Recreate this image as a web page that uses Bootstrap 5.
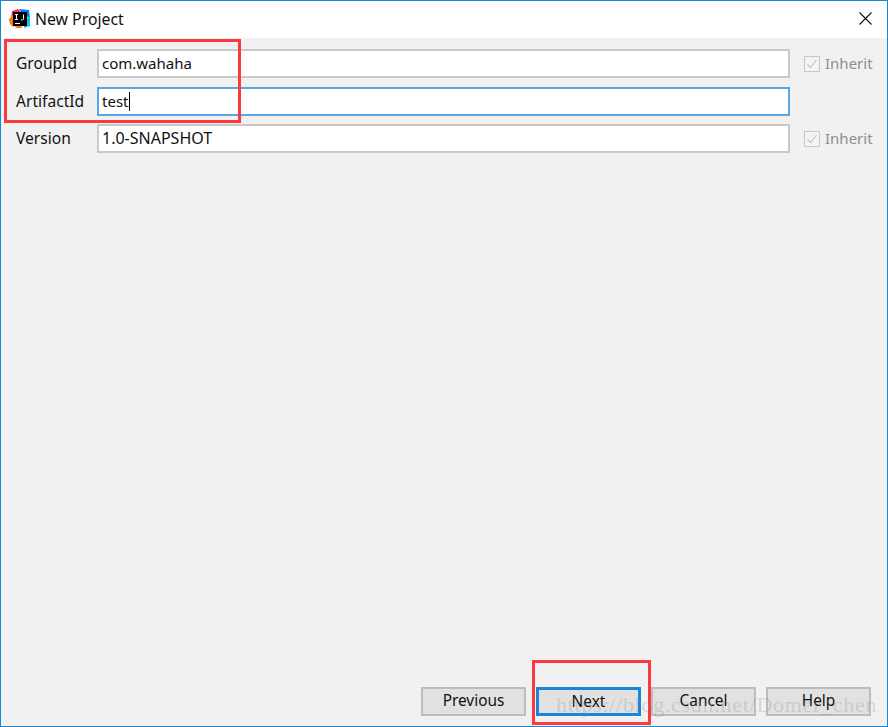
<!DOCTYPE html>
<html lang="en">
<head>
<meta charset="utf-8">
<title>New Project</title>
<link href="https://cdn.jsdelivr.net/npm/bootstrap@5.3.0/dist/css/bootstrap.min.css" rel="stylesheet">
<style>
html,body{height:100%;margin:0;}
body{background:#f1f1f1;font-family:"Noto Sans","Open Sans",sans-serif;font-size:15px;color:#111;}
.dlg-win{position:relative;width:888px;height:727px;border:1px solid #1a86d8;background:#f1f1f1;overflow:hidden;}
.dlg-title{height:37px;background:#fff;padding:0 0 2px 8px;gap:4px;}
.dlg-title-text{font-size:15.8px;line-height:20px;}
.dlg-close{margin-right:15px;}
.dlg-form{padding:11px 16px 0 15px;gap:8.5px;}
.dlg-row{height:29px;}
.dlg-label{width:81px;flex:none;line-height:29px;white-space:nowrap;font-size:15.6px;}
.dlg-input{width:693px;height:29px;flex:none;border:2px solid #c9c9c9;border-radius:0;background:#fff;padding:0 3px;font-size:15px;line-height:25px;color:#111;}
.dlg-input.is-on{border-color:#58a6e4;}
.dlg-value-wide{font-size:16px;}
.dlg-caret{display:inline-block;width:1px;height:19px;background:#000;vertical-align:-4px;margin-left:1px;}
.dlg-inh{margin-left:14px;gap:5px;color:#8e8e8e;}
.dlg-check{width:16px;height:16px;border:1px solid #c8c8c8;background:#f4f4f4;display:flex;}
.dlg-foot{padding:0 16px 10px 0;gap:10px;}
.dlg-btn{width:105px;height:29px;background:#e1e1e1;border:2px solid #bdbdbd;border-radius:0;padding:0 0 3px;font-size:15.4px;line-height:21px;color:#111;}
.dlg-btn.is-main{border:3px solid #1a86d8;padding-bottom:1px;}
.dlg-mark{position:absolute;border:3px solid #fb3a3f;pointer-events:none;}
.dlg-mark-a{left:3px;top:38px;width:237px;height:84px;}
.dlg-mark-b{left:531px;top:659px;width:119px;height:65px;}
.dlg-wm{position:absolute;left:555px;top:692px;font-family:"Liberation Serif",serif;font-size:22px;line-height:24px;color:rgba(120,120,120,.24);white-space:nowrap;letter-spacing:.72px;pointer-events:none;}
</style>
</head>
<body>
<div class="dlg-win d-flex flex-column">
  <div class="dlg-title d-flex align-items-center">
    <svg width="22" height="20" viewBox="0 0 22 20" aria-hidden="true">
      <polygon points="3,2 9,0 12,3 6,13 2,9" fill="#fe315d"/>
      <polygon points="0,10 4,6 7,14 4,18 1,15" fill="#f97a12"/>
      <polygon points="10,0 20,1 21,9 14,6" fill="#087cfa"/>
      <polygon points="5,15 11,13 13,19 7,19" fill="#f97a12"/>
      <polygon points="14,12 21,7 21,17 15,19" fill="#07c3f2"/>
      <rect x="4" y="3" width="14" height="14" fill="#000"/>
      <rect x="6" y="14" width="5" height="1" fill="#fff"/>
      <path d="M6 5.500h3M7.500 5.500v5M6 10.500h3M14.500 5.500v4.300q0 1-1 1h-1.500" stroke="#fff" stroke-width="1" fill="none"/>
    </svg>
    <span class="dlg-title-text flex-grow-1">New Project</span>
    <svg class="dlg-close" width="13" height="13" viewBox="0 0 13 13" aria-hidden="true"><path d="M.5.500l12 12M12.500.500l-12 12" stroke="#111" stroke-width="1.100" fill="none"/></svg>
  </div>
  <div class="dlg-form d-flex flex-column">
    <div class="dlg-row d-flex align-items-center">
      <label class="dlg-label">GroupId</label>
      <div class="dlg-input">com.wahaha</div>
      <div class="dlg-inh d-flex align-items-center"><span class="dlg-check"><svg width="14" height="14" viewBox="0 0 14 14"><path d="M2.500 7.500l3 3 6-7.500" stroke="#c4c4c4" stroke-width="1.200" fill="none"/></svg></span><span>Inherit</span></div>
    </div>
    <div class="dlg-row d-flex align-items-center">
      <label class="dlg-label">ArtifactId</label>
      <div class="dlg-input is-on">test<span class="dlg-caret"></span></div>
    </div>
    <div class="dlg-row d-flex align-items-center">
      <label class="dlg-label">Version</label>
      <div class="dlg-input dlg-value-wide">1.0-SNAPSHOT</div>
      <div class="dlg-inh d-flex align-items-center"><span class="dlg-check"><svg width="14" height="14" viewBox="0 0 14 14"><path d="M2.500 7.500l3 3 6-7.500" stroke="#c4c4c4" stroke-width="1.200" fill="none"/></svg></span><span>Inherit</span></div>
    </div>
  </div>
  <div class="flex-grow-1"></div>
  <div class="dlg-foot d-flex justify-content-end">
    <button type="button" class="btn dlg-btn">Previous</button>
    <button type="button" class="btn dlg-btn is-main">Next</button>
    <button type="button" class="btn dlg-btn">Cancel</button>
    <button type="button" class="btn dlg-btn">Help</button>
  </div>
  <div class="dlg-mark dlg-mark-a"></div>
  <div class="dlg-mark dlg-mark-b"></div>
  <div class="dlg-wm">https://blog.csdn.net/Domer_chen</div>
</div>
</body>
</html>
